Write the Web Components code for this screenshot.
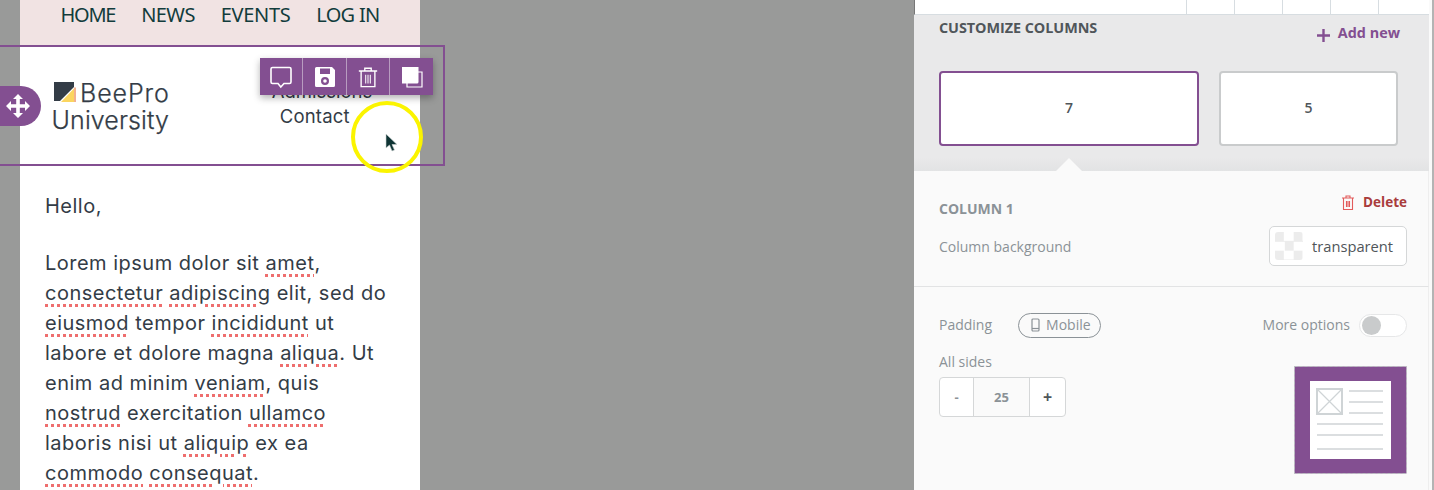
<!DOCTYPE html>
<html><head><meta charset="utf-8"><title>BeePro editor</title>
<style>
html,body{margin:0;height:490px;overflow:hidden;background:#999a99}
</style></head><body>
<app-shell>
  <email-canvas slot="canvas"></email-canvas>
  <settings-panel slot="panel"></settings-panel>
</app-shell>
<script>
function def(name, css, html){
  customElements.define(name, class extends HTMLElement{
    constructor(){super();const r=this.attachShadow({mode:'open'});r.innerHTML='<style>'+css+'</style>'+html;}
  });
}
def('app-shell',`:host{display:flex;width:1434px;height:490px;overflow:hidden}`,
`<slot name="canvas"></slot><slot name="panel"></slot>`);

def('email-canvas',`
:host{display:block;flex:0 0 914px;height:490px;position:relative;background:#999a99;overflow:hidden;padding-left:20px;box-sizing:border-box}
.page{width:400px;background:#fff;height:490px;display:flex;flex-direction:column}
.nav{height:45px;background:#f1e3e3;display:flex;justify-content:center;gap:26px;padding-top:2px;box-sizing:border-box;font:20px/26px "Noto Sans","Open Sans",sans-serif;color:#123c3c}
.head{height:120px;display:flex;box-sizing:border-box;padding:33px 0 0 31px;font-family:"Inter",sans-serif;color:#333c46}
.logo{flex:0 0 118px;font-size:25px;line-height:28px;text-align:center;letter-spacing:.1px;font-weight:300;-webkit-text-stroke:.25px #333c46;white-space:nowrap}
.brand{display:flex;align-items:center;justify-content:center;gap:4px;margin-left:3px;letter-spacing:.9px}
.brand span{position:relative;top:1px}
.menu{margin-left:102px;font-size:18.5px;line-height:25px;letter-spacing:.2px;display:flex;flex-direction:column;margin-top:1px}
.menu span:first-child{letter-spacing:0}
.menu span+span{margin-left:8px}
.text{font:20px/30px "Inter",sans-serif;color:#333c46;padding:26px 0 0 25px;letter-spacing:.49px;white-space:nowrap}
.text p{margin:0 0 27px}
.sp{text-decoration:underline dotted #ee6e6e 2.5px;text-underline-offset:4px}
.sel{position:absolute;left:-10px;top:45px;width:455px;height:121px;border:2px solid #834f91;box-sizing:border-box;pointer-events:none}
.move{position:absolute;left:0;top:86px;width:41px;height:40px;background:#834f91;border-radius:0 20px 20px 0;display:flex;align-items:center;justify-content:center;padding-right:5px;box-sizing:border-box}
.tools{position:absolute;left:260px;top:58px;height:37px;display:flex;background:#834f91;box-shadow:0 3px 7px rgba(0,0,0,.3)}
.tools div{height:37px;display:flex;align-items:center;justify-content:center;box-sizing:border-box;border-left:1px solid #b89cc0}
.tools div:first-child{border-left:0}
.halo{position:absolute;left:351px;top:101px;width:72px;height:72px;border:4px solid #fbf400;border-radius:50%;box-sizing:border-box}
.cur{position:absolute;left:385px;top:133px}
`,
`<div class="page">
  <div class="nav"><span style="letter-spacing:-1.25px">HOME</span><span style="letter-spacing:-.55px">NEWS</span><span style="letter-spacing:-.35px">EVENTS</span><span style="letter-spacing:-.7px">LOG IN</span></div>
  <div class="head">
    <div class="logo"><div class="brand"><svg width="22" height="21" viewBox="0 0 22 21"><path d="M0 0h20v5L6 19H0z" fill="#333c46"/><path d="M7 20L20 6.500V20z" fill="#fbd55f"/><path d="M20 5.500h2V20h-2z" fill="#f3b08f"/></svg><span>BeePro</span></div><div>University</div></div>
    <div class="menu"><span>Admissions</span><span>Contact</span></div>
  </div>
  <div class="text">
    <p>Hello,</p>
    Lorem ipsum dolor sit <span class="sp">amet</span>,<br>
    <span class="sp">consectetur</span> <span class="sp">adipiscing</span> elit, sed do<br>
    <span class="sp">eiusmod</span> tempor <span class="sp">incididunt</span> ut<br>
    labore et dolore magna <span class="sp">aliqua</span>. Ut<br>
    enim ad minim <span class="sp">veniam</span>, quis<br>
    <span class="sp">nostrud</span> exercitation <span class="sp">ullamco</span><br>
    laboris nisi ut <span class="sp">aliquip</span> ex ea<br>
    <span class="sp">commodo</span> <span class="sp">consequat</span>.
  </div>
</div>
<div class="sel"></div>
<div class="move"><svg width="26" height="26" viewBox="0 0 26 26" fill="#fff"><path d="M13 1l5 5h-3.200v5.200H20V8l5 5-5 5v-3.200h-5.200V20H18l-5 5-5-5h3.200v-5.200H6V18l-5-5 5-5v3.200h5.200V6H8z"/></svg></div>
<div class="tools">
  <div style="width:42px"><svg width="24" height="24" viewBox="0 0 24 24" fill="none" stroke="#fff" stroke-width="1.600"><path d="M3.500 2.500h17a1.500 1.500 0 0 1 1.500 1.500v13a1.500 1.500 0 0 1-1.500 1.500H15L11.800 22 9 18.500H3.500A1.500 1.500 0 0 1 2 17V4a1.500 1.500 0 0 1 1.500-1.500z"/></svg></div>
  <div style="width:44px"><svg width="22" height="22" viewBox="0 0 22 22"><path fill="#fff" fill-rule="evenodd" d="M2.500 1H18l3 3v15.500a1.500 1.500 0 0 1-1.500 1.500h-17A1.500 1.500 0 0 1 1 19.500v-17A1.500 1.500 0 0 1 2.500 1zM6 2.500V8h10V2.500zM11 11a4 4 0 1 0 0 8 4 4 0 0 0 0-8zm0 2.200a1.800 1.800 0 1 1 0 3.600 1.800 1.800 0 0 1 0-3.600z"/></svg></div>
  <div style="width:43px"><svg width="22" height="22" viewBox="0 0 22 24" fill="none" stroke="#fff" stroke-width="1.500"><path d="M1 5.500h20M7.500 5.500V2.500h7v3M3.500 5.500V22.500h15V5.500"/><path d="M8.500 9.500v9.500M11 9.500v9.500M13.500 9.500v9.500" stroke-width="1.100"/></svg></div>
  <div style="width:44px"><svg width="22" height="22" viewBox="0 0 22 22"><path d="M6 6h15v15H6z" fill="none" stroke="#fff" stroke-width="1.200"/><path d="M1 1h16.500v15a1.500 1.500 0 0 1-1.500 1.500H1z" fill="#fff"/></svg></div>
</div>
<div class="halo"></div>
<svg class="cur" width="14" height="20" viewBox="0 0 14 20"><path d="M1 1v14l3.500-3 2.500 6 2.500-1-2.500-5.500h5z" fill="#0f3434" stroke="#cfd4d4" stroke-width=".6"/></svg>`);

def('settings-panel',`
:host{display:block;flex:0 0 520px;height:490px;background:#fafafa;font-family:"Open Sans","Noto Sans",sans-serif;color:#8b9297;position:relative;overflow:hidden;border-right:2px solid #b4b4b4;box-sizing:border-box}
.top{height:15px;background:#fff;border-bottom:1px solid #d7dde1;border-left:1px solid #777;box-sizing:border-box;margin-right:3px;display:flex;justify-content:flex-end;padding-right:3px}
.top i{display:block;width:48px;border-left:1px solid #d7dde1;box-sizing:border-box}
.cols{height:156px;background:linear-gradient(#e9e9ea 0,#e9e9ea 142px,#e2e3e4 156px);margin-right:3px;position:relative;box-sizing:border-box;padding:0 25px}
.chead{display:flex;justify-content:space-between;height:56px}
.chead b{font-size:14.400px;line-height:20px;color:#50565a;font-weight:700;padding-top:3px;letter-spacing:-.05px}
.add{font-size:14.400px;font-weight:700;color:#834f91;display:flex;gap:8px;padding-top:8px;line-height:20px;padding-right:4px}
.boxes{display:flex;gap:20px}
.box{height:75px;background:#fff;border:2px solid #c9cbcc;border-radius:4px;box-sizing:border-box;display:flex;align-items:center;justify-content:center;color:#50565a;font-size:14px;font-weight:600;padding-bottom:2px}
.box.on{border-color:#834f91;width:260px}
.box.off{width:179px}
.arrow{position:absolute;left:142px;bottom:0;width:0;height:0;border:13px solid transparent;border-top:0;border-bottom-color:#fafafa}
.sec{margin-right:3px;box-sizing:border-box;padding:0 21px 0 25px}
.s1{height:116px;border-bottom:1px solid #e2e3e4;position:relative;border-right:1px solid #eeeeee}
.r1{display:flex;justify-content:space-between;padding-top:21px;height:48px;box-sizing:border-box}
.r1 b{font-size:14px;line-height:20px;padding-top:7px;color:#8b9297}
.del{font-size:13.500px;font-weight:700;color:#a93c3c;display:flex;align-items:flex-start;gap:8px;line-height:20px}
.r2{display:flex;justify-content:space-between;align-items:center;font-size:14px;margin-top:7px}
.swatch{width:138px;height:40px;box-sizing:border-box;border:1px solid #d5d7d8;border-radius:5px;background:#fff;display:flex;align-items:center;gap:9px;padding-left:5px;color:#50565a;font-size:14.700px;font-weight:500}
.chk{width:28px;height:28px;border-radius:3px;background:conic-gradient(#fff 25%,#ececec 0 50%,#fff 0 75%,#ececec 0) 0 0/18.670px 18.670px}
.s2{padding-top:26px;position:relative;height:203px;border-right:1px solid #eeeeee}
.r3{display:flex;align-items:center;font-size:14px;height:24px;line-height:24px}
.pill{margin-left:26px;border:1px solid #8b9297;border-radius:13px;height:25px;box-sizing:border-box;padding:0 9px 0 12px;display:flex;align-items:center;gap:6px;line-height:20px}
.more{margin-left:auto;margin-right:9px}
.tog{width:48px;height:23px;border:1px solid #e6e7e8;border-radius:12px;box-sizing:border-box;background:#fff;padding:1px 0 0 2px}
.tog i{display:block;width:19px;height:19px;border-radius:50%;background:#c9cbcc}
.sides{font-size:14px;margin-top:15px;line-height:20px}
.step{display:flex;width:127px;height:40px;box-sizing:border-box;border:1px solid #d5d7d8;border-radius:4px;background:#fff;margin-top:5px;font-weight:700;font-size:13px;color:#8b9297}
.step span{display:flex;align-items:center;justify-content:center}
.step .v{flex:0 0 55px;background:#fafafa;border:solid #d5d7d8;border-width:0 1px}
.step .m{flex:0 0 33px}.step .p{flex:1;font-size:16px;color:#50565a}
.prev{position:absolute;left:380px;top:79px}
`,
`<div class="top"><i></i><i></i><i></i><i></i><i></i></div>
<div class="cols">
  <div class="chead"><b>CUSTOMIZE COLUMNS</b><span class="add"><svg width="13" height="13" viewBox="0 0 13 13" style="margin-top:6px"><path d="M6.500 0v13M0 6.500h13" stroke="#834f91" stroke-width="2.400"/></svg>Add new</span></div>
  <div class="boxes"><div class="box on">7</div><div class="box off">5</div></div>
  <div class="arrow"></div>
</div>
<div class="sec s1">
  <div class="r1"><b>COLUMN 1</b><span class="del"><svg width="14" height="15" viewBox="0 0 14 15" fill="none" stroke="#e25b5b" stroke-width="1.100" style="margin-top:3px"><path d="M1 3h12M5 3V1h4v2M2.500 3v11.500h9V3M5.500 6v6M7 6v6M8.500 6v6"/></svg>Delete</span></div>
  <div class="r2"><span>Column background</span><div class="swatch"><div class="chk"></div><span>transparent</span></div></div>
</div>
<div class="sec s2">
  <div class="r3"><span>Padding</span><span class="pill"><svg width="9" height="14" viewBox="0 0 9 14" fill="none" stroke="#8b9297" stroke-width="1.200"><rect x="1" y="1" width="7" height="12" rx="1"/><path d="M1 10.500h7" /></svg>Mobile</span><span class="more">More options</span><div class="tog"><i></i></div></div>
  <div class="sides">All sides</div>
  <div class="step"><span class="m">-</span><span class="v">25</span><span class="p">+</span></div>
  <svg class="prev" width="113" height="108" viewBox="0 0 113 108"><rect x=".5" y=".5" width="112" height="107" fill="#834f91" stroke="#b9bcbf" stroke-dasharray="3 2"/><rect x="16" y="15" width="81" height="78" fill="#fff"/><g fill="none" stroke="#cfd4d6"><rect x="23" y="23" width="25" height="25" stroke-width="2"/><path d="M23 23l25 25M48 23L23 48" stroke-width="1.200"/><path d="M55 25h34M55 36h34M55 47h34M23 58h66M23 69h66M23 83h66" stroke-width="1.600"/></g></svg>
</div>`);
</script></body></html>
